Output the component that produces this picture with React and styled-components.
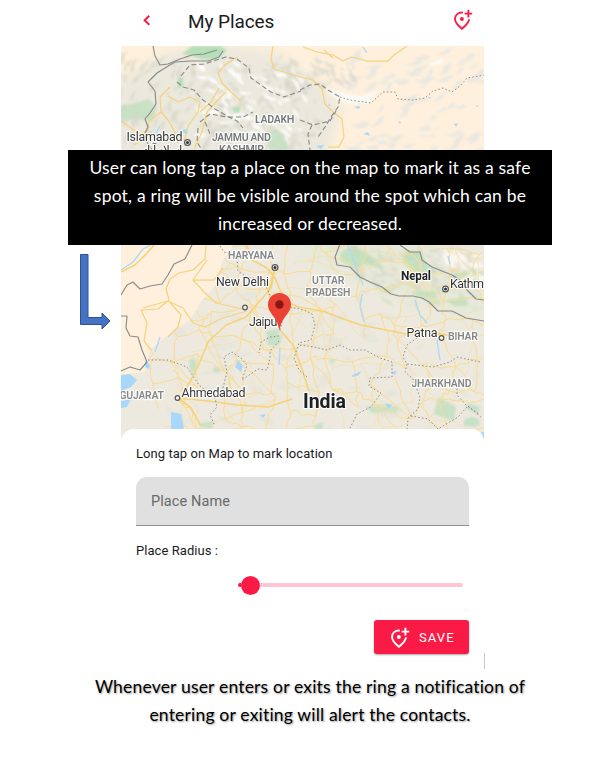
import React from "react";
import styled, { createGlobalStyle } from "styled-components";

const GlobalStyle = createGlobalStyle`
  * { box-sizing: border-box; }
  body { margin: 0; background: #fff; font-family: Roboto, "Liberation Sans", sans-serif; color: #1b1b1d; }
`;

const Page = styled.main`
  position: relative;
  width: 597px;
  height: 765px;
  overflow: hidden;
  background: #fff;
`;
const Phone = styled.section`
  display: flex;
  flex-direction: column;
  width: 363px;
  height: 669px;
  margin-left: 121px;
`;
const TopBar = styled.header`
  display: flex;
  align-items: flex-start;
  height: 46px;
  padding: 9px 10px 0 21px;
`;
const BackIcon = styled.svg`
  width: 10px;
  height: 12px;
  margin-top: 5px;
`;
const Title = styled.h1`
  flex: 1;
  margin: 1px 0 0 36px;
  font-size: 19px;
  font-weight: 400;
  line-height: 24px;
  letter-spacing: -0.08px;
`;
const AddPinSvg = styled.svg`
  width: 21px;
  height: 21px;
  flex: none;
`;
const MapSvg = styled.svg`
  display: block;
  width: 363px;
  height: 393px;
  flex: none;
`;
const MapLabel = styled.text`
  font-family: Roboto, sans-serif;
  font-size: ${(p) => p.$size || 12}px;
  font-weight: ${(p) => p.$weight || 400};
  fill: ${(p) => p.$color || "#333436"};
  stroke: rgba(255, 255, 255, 0.8);
  stroke-width: 2.4px;
  stroke-linejoin: round;
  paint-order: stroke;
`;
const Sheet = styled.section`
  position: relative;
  flex: 1;
  display: flex;
  flex-direction: column;
  margin-top: -10px;
  padding: 16px 15px 0;
  border-radius: 13px 13px 0 0;
  background: #fff;
`;
const SheetText = styled.p`
  margin: 0;
  font-size: 13px;
  line-height: 18px;
  letter-spacing: 0.06px;
`;
const Field = styled.div`
  display: flex;
  align-items: center;
  height: 49px;
  margin: 14px 0 16px;
  padding: 0 15px;
  border-radius: 11px 11px 0 0;
  border-bottom: 1px solid #919191;
  background: #e0e0e0;
  color: #69696a;
  font-size: 14.5px;
  letter-spacing: 0.1px;
`;
const Slider = styled.div`
  display: flex;
  align-items: center;
  height: 20px;
  margin: 15px 6px 0 102px;
`;
const TrackStart = styled.div`
  width: 3px;
  height: 4px;
  border-radius: 2px 0 0 2px;
  background: #f91b45;
`;
const Thumb = styled.div`
  width: 19px;
  height: 19px;
  margin-left: -0.5px;
  border-radius: 50%;
  background: #f91b45;
`;
const Track = styled.div`
  flex: 1;
  height: 4px;
  border-radius: 0 2px 2px 0;
  background: #fdc6d0;
`;
const SaveButton = styled.button`
  display: flex;
  align-items: center;
  align-self: flex-end;
  width: 95px;
  height: 34px;
  margin-top: 25px;
  padding: 0 0 0 16px;
  gap: 8px;
  border: 0;
  border-radius: 3px;
  background: #f91b45;
  box-shadow: 0 1px 2px rgba(0, 0, 0, 0.35);
  color: #fff;
  font: 400 13px Roboto, sans-serif;
  letter-spacing: 1.1px;
`;
const EdgeTick = styled.div`
  position: absolute;
  right: -1px;
  bottom: 0;
  width: 1px;
  height: 16px;
  background: #c8c8c8;
`;
const Callout = styled.aside`
  position: absolute;
  left: 68px;
  top: 150px;
  width: 484px;
  height: 95px;
  padding-top: 4px;
  background: #000;
  color: #fff;
`;
const Note = styled.p`
  margin: 4px 0 0;
  padding-left: 23px;
  text-shadow: 1px 1px 2px rgba(0, 0, 0, 0.4);
  color: #000;
`;
const Line = styled.span`
  display: block;
  height: 28px;
  text-align: center;
  white-space: nowrap;
  font-family: Lato, sans-serif;
  font-size: 17.5px;
  line-height: 28px;
  letter-spacing: 0.19px;
`;
const ArrowSvg = styled.svg`
  position: absolute;
  left: 78px;
  top: 252px;
  width: 34px;
  height: 80px;
`;

function AddPin({ color }) {
  return (
    <AddPinSvg viewBox="0 0 21 21" fill="none" stroke={color} strokeWidth="1.9">
      <path d="M9.9 3.6C5.1 3.1 2 6 2 10c0 3.500 3.200 6.700 6.900 9.800C12.800 16.500 16 13.500 16 10.200" />
      <path d="M15.400 .8v7.600M11.600 4.600h7.600" />
      <circle cx="8.900" cy="10" r="2" fill={color} stroke="none" />
    </AddPinSvg>
  );
}

function seeded(seed) {
  let s = seed;
  return () => {
    s = (s * 16807) % 2147483647;
    return s / 2147483647;
  };
}

// Elongated terrain patches scattered over a rectangle.
function patches(seed, count, x, y, w, h, size, tilt) {
  const r = seeded(seed);
  let d = "";
  for (let i = 0; i < count; i++) {
    const cx = x + r() * w;
    const cy = y + r() * h;
    const a = tilt + (r() - 0.5) * 1.2;
    const l = size * (0.4 + r());
    const t = l * (0.2 + r() * 0.25);
    const dx = Math.cos(a) * l;
    const dy = Math.sin(a) * l;
    const nx = -Math.sin(a) * t;
    const ny = Math.cos(a) * t;
    d += `M${(cx - dx).toFixed(1)} ${(cy - dy).toFixed(1)}q${(dx * 0.5 + nx).toFixed(1)} ${(dy * 0.5 + ny).toFixed(1)} ${dx.toFixed(1)} ${dy.toFixed(1)}t${dx.toFixed(1)} ${dy.toFixed(1)}q${(-dx + nx * 3).toFixed(1)} ${(-dy + ny * 3).toFixed(1)} ${(-2 * dx).toFixed(1)} ${(-2 * dy).toFixed(1)}z`;
  }
  return d;
}

// Irregular local roads joining the points of a jittered grid.
function roads(seed, x, y, cols, rows, step, keep) {
  const r = seeded(seed);
  const pts = [];
  for (let j = 0; j < rows; j++)
    for (let i = 0; i < cols; i++)
      pts.push([x + i * step + (r() - 0.5) * step * 0.9, y + j * step + (r() - 0.5) * step * 0.9]);
  let d = "";
  const join = (a, b) => {
    if (r() > keep) return;
    const p = [1, 2, 3].map((k) => [
      a[0] + ((b[0] - a[0]) * k) / 4 + (r() - 0.5) * 5,
      a[1] + ((b[1] - a[1]) * k) / 4 + (r() - 0.5) * 5,
    ]);
    d += "M" + [a, ...p, b].map((q) => q[0].toFixed(1) + " " + q[1].toFixed(1)).join("L");
  };
  for (let j = 0; j < rows; j++)
    for (let i = 0; i < cols; i++) {
      const a = pts[j * cols + i];
      if (i + 1 < cols) join(a, pts[j * cols + i + 1]);
      if (j + 1 < rows) join(a, pts[(j + 1) * cols + i]);
      if (i + 1 < cols && j + 1 < rows && r() > 0.65) join(a, pts[(j + 1) * cols + i + 1]);
    }
  return d;
}

const INDIA = "M121 375L145 372 150 350 165 337 190 320 202 300 216 285 222 262 238 238H484V440H121Z";

const SOLID_BORDERS = [
  "M153 46l2 10 5 9 8-1 12-5 12-4 12-1 13-4",
  "M148 82l9-9 8-5 10-6 16-1 17 0 11-4 4-6M148 82l7 9 1 13-6 9-5 6 3 8-3 6 2 9 5 8",
  "M121 295l6-10 6-3 7 7 10-3 12-2 6-9 6-11 11-5 7-14",
  "M121 316l6 0-1 12 4 8 8 1 4 13 5 12-7 8-10-3-9 4",
  "M340 244l-5 13 2 8 13 2 10 10 10 5 12 5 9 7 8 2 14 0 9 2 7 4 9 9 14 0 14 7 18 3",
  "M400 245l10 7 10 0 2 8 10 7 10 4 10 4 8 5 7 10 9 9 8 1",
];
const DASHED_BORDERS = [
  "M181 76l9-11 14-1 22-7 11 2 12 9 2 10 10 7 10 7 13 5 17-6M177 82l6 5 11 3 9 10 12 9 12 7 10 5 6 7",
  "M300 90l10-5 10-1 8 6 12 7-2 10-7 10-6 10-7 10M300 120l13 5 17-4 6-10M312 125l-4 9 2 16",
  "M200 122l10-8 17 3 16 0 10-5M198 128l-1 14 5 8M205 122l5 12",
];
const DOTTED_BORDERS = [
  "M340 97l10 3 21 3 12-11 12 0 3 7 15 1 12-2 8-7 10-3 9 4 8-6 7-8 18-3",
  "M148 360l20 0 19 7 12 18 16 13 2 9-7 8 5 11M223 388l4-16-3-15 8-5 10 7 5 6-5 15 16-11 9 1 3-12 0-7 9-10",
  "M279 336l-9 1-9 5-2 11M280 330l4-15 6-8 14 3 8 4 3 11-4 15-12 3-5 15 5 12 8 7",
  "M300 345l14 2 13 3 13-5 10 5 15 0 15 8 12 4 0 15-22 1-1 8 12 7-10 14-14 7-7 14",
  "M417 338l-10 7-4 12 4 7 9 1 17 2 17-5 7-5 23 5M407 364l-2 8 8 7 7 18-2 12-10 9-1 13",
  "M457 385l0 10 9 10 14 10M411 416l17 3 10 10 20-12 10-11 14 12M220 246l4 6 13 5 1 14 9 6 16 3 7 15 11 13",
];
const MAIN_ROADS =
  "M238 240l10 8 4 12 15 8 8 10 5 12 8 12 10 5 12 2 15 3 16 6 20 7 20 4 25 5 20-3 20 4 18-1" +
  "M275 268l-4 20-12 14-13 15-20 8-18 17-8 20-9 18-9 15M275 268l-7 24 7 19 5 19 13 15 8 21 8 25" +
  "M178 398l13 10 10 18M178 398l30 3 30 4 30 2 24-8M121 270l10-7 12-8 10-12";
const WEST_ROADS =
  "M206 245l-1 14-12 11-14 3-9 6-4 10 3 11-11 9-17 1 6 13-3 18 7 9M207 260l-14 20 11 12 12 11 26 6M193 280l21 0 9-12M143 308l25-7 15 7 10 15 12 4 15-8 27-8M168 300l13 15-3 12-10 10" +
  "M170 87l-10 10 1 15 7 8 6 10 4 13M168 96l10 6 12-5 10 5-2 10-10 14-4 16M161 112l-12 9-3 16-12 8M121 121l10 7 10 6 8-4M200 112l11-10 8-14M237 57l-12 8-7 8 4 10 9 9 10 9M226 92l-10 10-9 10-5 20-8 17";
const NORTH_ROADS =
  "M303 47l14 5 16 3 10 6 9-4 15 4 21 0 6-6 13-9M324 50l9 8M273 46l-2 13 3 10 26 8 13 3 9 9 3 15 8 8 9 7 2 18-5 10-11 0";

function PlacesMap() {
  return (
    <MapSvg viewBox="121 46 363 393" fill="none">
      <defs>
        <clipPath id="india"><path d={INDIA} /></clipPath>
        <filter id="soft" x="-5%" y="-5%" width="110%" height="110%"><feGaussianBlur stdDeviation="1" /></filter>
        <filter id="haze" x="-20%" y="-20%" width="140%" height="140%"><feGaussianBlur stdDeviation="6" /></filter>
        <filter id="line" x="-5%" y="-5%" width="110%" height="110%"><feGaussianBlur stdDeviation="0.3" /></filter>
      </defs>
      <rect x="121" y="46" width="363" height="393" fill="#fef0dc" />
      <path filter="url(#haze)" fill="#ebe8dd" d="M115 85L160 55 225 45 280 55 325 88 342 110 320 170H115Z" />
      <path fill="#ede9df" d={INDIA} />
      <path filter="url(#haze)" fill="#e6e9d9" d="M300 240h100l90 50v35l-100-30-90-35z" />
      <g filter="url(#soft)">
        <path fill="#cfcfc0" opacity=".5" d={patches(17, 150, 121, 55, 180, 95, 6, 2.3)} />
        <path fill="#fff" opacity=".85" d={patches(45, 95, 200, 62, 110, 78, 6, 0.8)} />
        <path fill="#c9c9bd" opacity=".45" d={patches(51, 70, 210, 68, 110, 78, 5, 0.8)} />
        <path fill="#e8e7e2" opacity=".9" d={patches(71, 75, 350, 50, 134, 103, 8, -0.25)} />
        <path fill="#d9d8cf" opacity=".75" d={patches(81, 42, 290, 58, 65, 28, 6, 1)} />
        <path fill="#faf9f6" d="M325 88l18 5 18 3 16-5-7 12-22 1-14-7zM430 63l14-5-3 6-12 2z" />
        <path fill="#b6dfb9" d="M182 54l10-8h28l7 4-9 9-17 0-8-3zM178 78l5 0 0 9-5 1zM232 107l8 0 0 6-6 0z" />
        <path fill="#c2dec0" opacity=".8" d="M121 105l12-1 16-5 8 9-5 14-17-4-14 5zM267 133l9-4 8 6 5 15h-20z" />
        <path fill="#bcdfbb" opacity=".8" d="M340 253l13-8 13 8 12 7 5 9-18-5-9 5-15-8zM405 250l17 2 4 12 12 9-22 0-13-10zM445 277l27-8 12 4v12l-25-3zM446 300l18-2 4 8-14 0zM410 292l24-1 4 7-20-1z" />
        <path fill="#bddfc0" opacity=".8" d="M266 331l13-2-1 16-11-1zM268 339l14-4-2 10-10 1zM189 360l6-3 2 8-3 11-4-7zM213 367l8 1-2 5-6-1zM328 360l8-1-4 5zM365 407l16-2 4 7-12 1zM383 404l17 3-5 6-12-1zM464 421a8 5 0 1 1 10 6l-10-1zM438 397l18 10-2 14-20-7zM468 403l12 4-2 7-12-5zM315 425l8-3-1 8-7-1zM200 423l14-2-3 8-11-2z" />
        <path fill="#c7deb9" opacity=".6" d={patches(22, 16, 360, 249, 120, 55, 8, 0.6)} />
        <path fill="#c8c8b8" opacity=".4" d={patches(31, 95, 355, 246, 120, 45, 5, 0.8)} />
        <path fill="#faf6ef" d={patches(41, 12, 450, 245, 34, 34, 9, 0.6)} />
        <path fill="#dde1d1" opacity=".4" clipPath="url(#india)" d={patches(37, 80, 175, 285, 310, 145, 9, 0.2)} />
      </g>
      <g clipPath="url(#india)" filter="url(#line)" stroke="#f9dc91" strokeLinejoin="round">
        <path strokeWidth="1" d={roads(91, 150, 248, 16, 9, 23, 0.79)} />
        <path strokeWidth=".65" stroke="#f6dfa8" d={roads(63, 170, 255, 13, 7, 29, 0.4)} />
        <path strokeWidth="1.6" stroke="#f6d278" d={MAIN_ROADS} />
      </g>
      <path filter="url(#line)" stroke="#f5d27e" strokeWidth="1.25" strokeLinejoin="round" d={WEST_ROADS + NORTH_ROADS} />
      <path filter="url(#line)" stroke="#f5d174" strokeWidth="1.5" d="M121 272l14-7 11-11 10-11" />
      <g stroke="#acd9f8" strokeWidth="1.3">
        <path d="M121 270l12-8 10-13 8-4M160 126l-5 9 2 9M348 246l10 27 5 12M362 294l-2 13 4 15M415 300l5 15 7 8M448 256l2 8M437 340l3 20M468 291l7 6M160 337l-5 15M280 348l-1 17M363 47l4 6" />
      </g>
      <g fill="#a7d8fb">
        <path d="M121 375l9-1 7 6-6 7-10 4zM145 360l5 5-1 4-4-2zM171 412l10 2 3 15-13 0zM121 401l10-2-4 8-6 1zM238 360l5 6-2 6-6-5zM260 415l6-1-3 4zM351 376l10-5-2 4-6 2zM391 372l6-1-2 4zM385 403l7 2-3 4z" />
        <path d="M354 107l6-1-1 3zM363 134l5-2 2 4-3-1zM316 146l8-1-3 4zM398 121l3 1-1 2zM454 124l4-1-2 4zM428 97l3 0-1 2zM182 130l4-1 2 5-4-1zM328 103l3 3-2 0zM476 105l3 1-2 1zM412 150l4 0-2 1zM481 432h3v8z" />
      </g>
      <g filter="url(#line)" stroke="#8b8b89" strokeWidth="1.15" strokeLinejoin="round">
        {SOLID_BORDERS.map((d) => <path key={d} d={d} />)}
        {DASHED_BORDERS.map((d) => <path key={d} d={d} strokeDasharray="5 2.800" />)}
        {DOTTED_BORDERS.map((d) => <path key={d} d={d} strokeWidth="1" strokeDasharray="1.500 2.200" />)}
      </g>
      <g fill="#f5f3ec" stroke="#555759" strokeWidth="1.2">
        <circle cx="245" cy="307.500" r="2.300" />
        <circle cx="177.500" cy="398" r="2.300" />
        <circle cx="441.500" cy="338" r="2.300" />
        {[[187.5, 142.5], [275, 267.5], [445.5, 289]].map(([x, y]) => (
          <g key={x}><circle cx={x} cy={y} r="2.900" /><circle cx={x} cy={y} r="1.500" fill="#333" stroke="none" /></g>
        ))}
      </g>
      <MapLabel x="126.500" y="141" textLength="56" $size={12.5}>Islamabad</MapLabel>
      <MapLabel x="143" y="154" textLength="39" $size={12}>اسلام آباد</MapLabel>
      <MapLabel x="255" y="123" textLength="39.500" $weight={600} $color="#77797b" $size={10.8}>LADAKH</MapLabel>
      <MapLabel x="212" y="141" textLength="59" $weight={600} $color="#77797b" $size={10.6}>JAMMU AND</MapLabel>
      <MapLabel x="219" y="153" textLength="45" $weight={600} $color="#77797b" $size={10.6}>KASHMIR</MapLabel>
      <MapLabel x="228" y="258.500" textLength="46" $weight={600} $color="#858688" $size={10.5}>HARYANA</MapLabel>
      <MapLabel x="216" y="285.500" textLength="53" $size={12.3}>New Delhi</MapLabel>
      <MapLabel x="312" y="283.500" textLength="32.500" $weight={600} $color="#858688" $size={10.5}>UTTAR</MapLabel>
      <MapLabel x="305.500" y="295.500" textLength="45" $weight={600} $color="#858688" $size={10.5}>PRADESH</MapLabel>
      <MapLabel x="249" y="325.500" textLength="28.500" $size={12.5}>Jaipu</MapLabel>
      <MapLabel x="401" y="280" textLength="30" $size={12} $weight={700} $color="#202124">Nepal</MapLabel>
      <MapLabel x="450" y="287.500" textLength="34" $size={12.5}>Kathm</MapLabel>
      <MapLabel x="406.500" y="337" textLength="31" $size={12.5}>Patna</MapLabel>
      <MapLabel x="448" y="340" textLength="30" $weight={600} $color="#858688" $size={10.5}>BIHAR</MapLabel>
      <MapLabel x="411.500" y="386.500" textLength="60" $weight={600} $color="#858688" $size={10.5}>JHARKHAND</MapLabel>
      <MapLabel x="119.500" y="399" textLength="44.500" $weight={600} $color="#858688" $size={10.5}>GUJARAT</MapLabel>
      <MapLabel x="181.500" y="396.500" textLength="64" $size={12.5}>Ahmedabad</MapLabel>
      <MapLabel x="303" y="408" textLength="43" $size={19.5} $weight={700} $color="#202124">India</MapLabel>
      <path fill="#ea4335" d="M279.500 293c-6.400 0-11.500 5-11.500 11.500 0 9.500 9.500 11.500 11.500 26.500 2-15 11.500-17 11.500-26.500 0-6.500-5.100-11.500-11.500-11.500z" />
      <circle cx="279.500" cy="304.500" r="4.200" fill="#891512" />
    </MapSvg>
  );
}

export default function App() {
  return (
    <Page>
      <GlobalStyle />
      <Phone>
        <TopBar>
          <BackIcon viewBox="0 0 10 12" fill="none" stroke="#f91b45" strokeWidth="2"><path d="M7.300 1.800L2.600 6.300l4.700 4.500" /></BackIcon>
          <Title>My Places</Title>
          <AddPin color="#f91b45" />
        </TopBar>
        <PlacesMap />
        <Sheet>
          <SheetText>Long tap on Map to mark location</SheetText>
          <Field>Place Name</Field>
          <SheetText>Place Radius :</SheetText>
          <Slider><TrackStart /><Thumb /><Track /></Slider>
          <SaveButton type="button"><AddPin color="#fff" /><span>SAVE</span></SaveButton>
          <EdgeTick />
        </Sheet>
      </Phone>
      <Note>
        <Line>Whenever user enters or exits the ring a notification of</Line>
        <Line>entering or exiting will alert the contacts.</Line>
      </Note>
      <Callout>
        <Line>User can long tap a place on the map to mark it as a safe</Line>
        <Line>spot, a ring will be visible around the spot which can be</Line>
        <Line>increased or decreased.</Line>
      </Callout>
      <ArrowSvg viewBox="78 252 34 80">
        <path d="M80.500 254.500h7.500v63h14v-4.500l8 8-8 8v-4.500H80.500z" fill="#4472c4" stroke="#2f528f" />
      </ArrowSvg>
    </Page>
  );
}
